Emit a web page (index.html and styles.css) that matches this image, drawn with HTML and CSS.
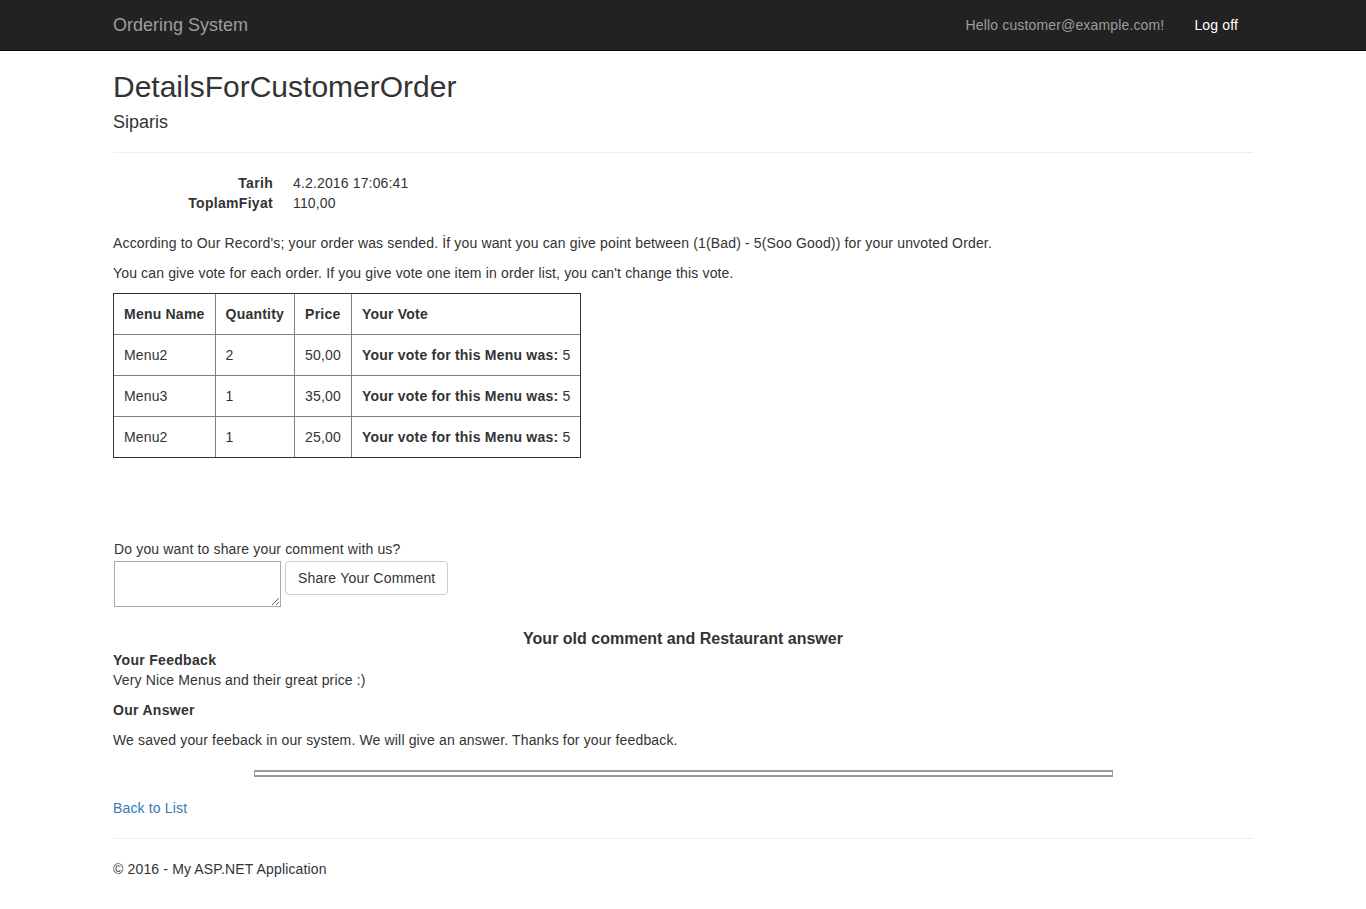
FILE: index.html
```html
<!DOCTYPE html>
<html>
<head>
<meta charset="utf-8">
<title>DetailsForCustomerOrder</title>
<link rel="stylesheet" href="styles.css">
</head>
<body>
<div class="navbar">
  <div class="container nav-inner">
    <a class="brand" href="#">Ordering System</a>
    <div class="nav-right">
      <a class="nav-link" href="#">Hello customer@example.com!</a>
      <a class="nav-link active" href="#">Log off</a>
    </div>
  </div>
</div>
<div class="container body-content">
  <h2 class="title">DetailsForCustomerOrder</h2>
  <div>
    <h4 class="subtitle">Siparis</h4>
    <hr class="rule">
    <dl class="dl-horizontal">
      <dt>Tarih</dt><dd>4.2.2016 17:06:41</dd>
      <dt>ToplamFiyat</dt><dd>110,00</dd>
    </dl>
  </div>
  <p class="para">According to Our Record's; your order was sended. İf you want you can give point between (1(Bad) - 5(Soo Good)) for your unvoted Order.</p>
  <p class="para">You can give vote for each order. If you give vote one item in order list, you can't change this vote.</p>
  <table class="orders">
    <tr><th>Menu Name</th><th>Quantity</th><th>Price</th><th>Your Vote</th></tr>
    <tr><td>Menu2</td><td>2</td><td>50,00</td><td><b>Your vote for this Menu was:</b> 5</td></tr>
    <tr><td>Menu3</td><td>1</td><td>35,00</td><td><b>Your vote for this Menu was:</b> 5</td></tr>
    <tr><td>Menu2</td><td>1</td><td>25,00</td><td><b>Your vote for this Menu was:</b> 5</td></tr>
  </table>
  <div class="comment-form">
    <label class="comment-label">Do you want to share your comment with us?</label>
    <div class="comment-row">
      <textarea class="comment-box"></textarea>
      <button class="btn">Share Your Comment</button>
    </div>
  </div>
  <div class="old-title">Your old comment and Restaurant answer</div>
  <div class="fb-label">Your Feedback</div>
  <div class="fb-text">Very Nice Menus and their great price :)</div>
  <div class="ans-label">Our Answer</div>
  <p class="ans-text">We saved your feeback in our system. We will give an answer. Thanks for your feedback.</p>
  <div class="bar"></div>
  <p class="back"><a href="#">Back to List</a></p>
  <hr class="rule">
  <footer><p class="foot">© 2016 - My ASP.NET Application</p></footer>
</div>
</body>
</html>
```
FILE: styles.css
```css
* { box-sizing: border-box; }
html, body { margin: 0; padding: 0; }
body {
  font-family: "Liberation Sans", Arial, sans-serif;
  font-size: 14px;
  line-height: 20px;
  letter-spacing: 0.15px;
  color: #333;
  background: #fff;
}
a { color: #337ab7; text-decoration: none; }
.container {
  width: 1170px;
  margin: 0 auto;
  padding: 0 15px;
}
.navbar {
  height: 51px;
  margin-bottom: -1px;
  background: #222;
  border-bottom: 1px solid #080808;
  position: relative;
  z-index: 1;
}
.nav-inner {
  display: flex;
  justify-content: space-between;
  align-items: flex-start;
}
.brand {
  color: #9d9d9d;
  font-size: 18px;
  line-height: 20px;
  letter-spacing: 0;
  padding: 15px 0;
  height: 50px;
}
.nav-right {
  display: flex;
}
.nav-link {
  color: #9d9d9d;
  padding: 15px;
  line-height: 20px;
}
.nav-link.active { color: #fff; }
.title {
  font-size: 30px;
  font-weight: 500;
  line-height: 33px;
  letter-spacing: 0;
  margin: 20px 0 10px;
}
.subtitle {
  font-size: 18px;
  font-weight: 500;
  line-height: 19px;
  letter-spacing: 0;
  margin: 10px 0 10px;
}
.rule {
  border: 0;
  border-top: 1px solid #eee;
  margin: 20px 0;
  height: 0;
}
.dl-horizontal {
  display: grid;
  grid-template-columns: 160px 1fr;
  column-gap: 20px;
  margin: 0 0 20px;
}
.dl-horizontal dt { font-weight: bold; text-align: right; letter-spacing: 0.3px; }
.dl-horizontal dd { margin: 0; }
.para { margin: 0 0 10px; }
.orders {
  border-collapse: separate;
  border-spacing: 0;
  border: 1px solid #333;
  margin: 0;
}
.orders th, .orders td {
  padding: 10px;
  text-align: left;
  border-right: 1px solid #808080;
  border-bottom: 1px solid #808080;
  vertical-align: top;
  white-space: nowrap;
}
.orders th, .orders b { font-weight: bold; letter-spacing: 0.22px; }
.orders tr > :last-child { border-right: 0; }
.orders tr:last-child > * { border-bottom: 0; }
.orders td:nth-child(3) { text-align: right; }
.comment-form {
  margin: 81px 0 0 1px;
  display: flex;
  flex-direction: column;
  gap: 2px;
}
.comment-label { font-weight: normal; }
.comment-row {
  display: flex;
  gap: 4px;
  align-items: flex-start;
}
.comment-box {
  width: 167px;
  height: 46px;
  border: 1px solid #a9a9a9;
  margin: 0;
  padding: 2px;
  resize: both;
  font-family: "Liberation Mono", monospace;
}
.btn {
  height: 34px;
  padding: 6px 12px;
  font-family: "Liberation Sans", Arial, sans-serif;
  font-size: 14px;
  line-height: 20px;
  letter-spacing: 0.2px;
  color: #333;
  background: #fff;
  border: 1px solid #ccc;
  border-radius: 4px;
}
.old-title {
  margin-top: 22px;
  text-align: center;
  font-weight: bold;
  font-size: 16px;
  line-height: 20px;
  letter-spacing: 0;
}
.fb-label { margin-top: 1px; font-weight: bold; letter-spacing: 0.3px; }
.ans-label { margin-top: 10px; font-weight: bold; letter-spacing: 0.3px; }
.ans-text { margin: 10px 0 10px; }
.bar {
  width: 859px;
  height: 7px;
  margin: 20px auto 0;
  border: 2px solid #9b9b9b;
  border-left-width: 1px;
  border-right-width: 1px;
  background: #fff;
}
.back { margin: 21px 0 10px; }
.foot { margin: 0 0 10px; }
```
